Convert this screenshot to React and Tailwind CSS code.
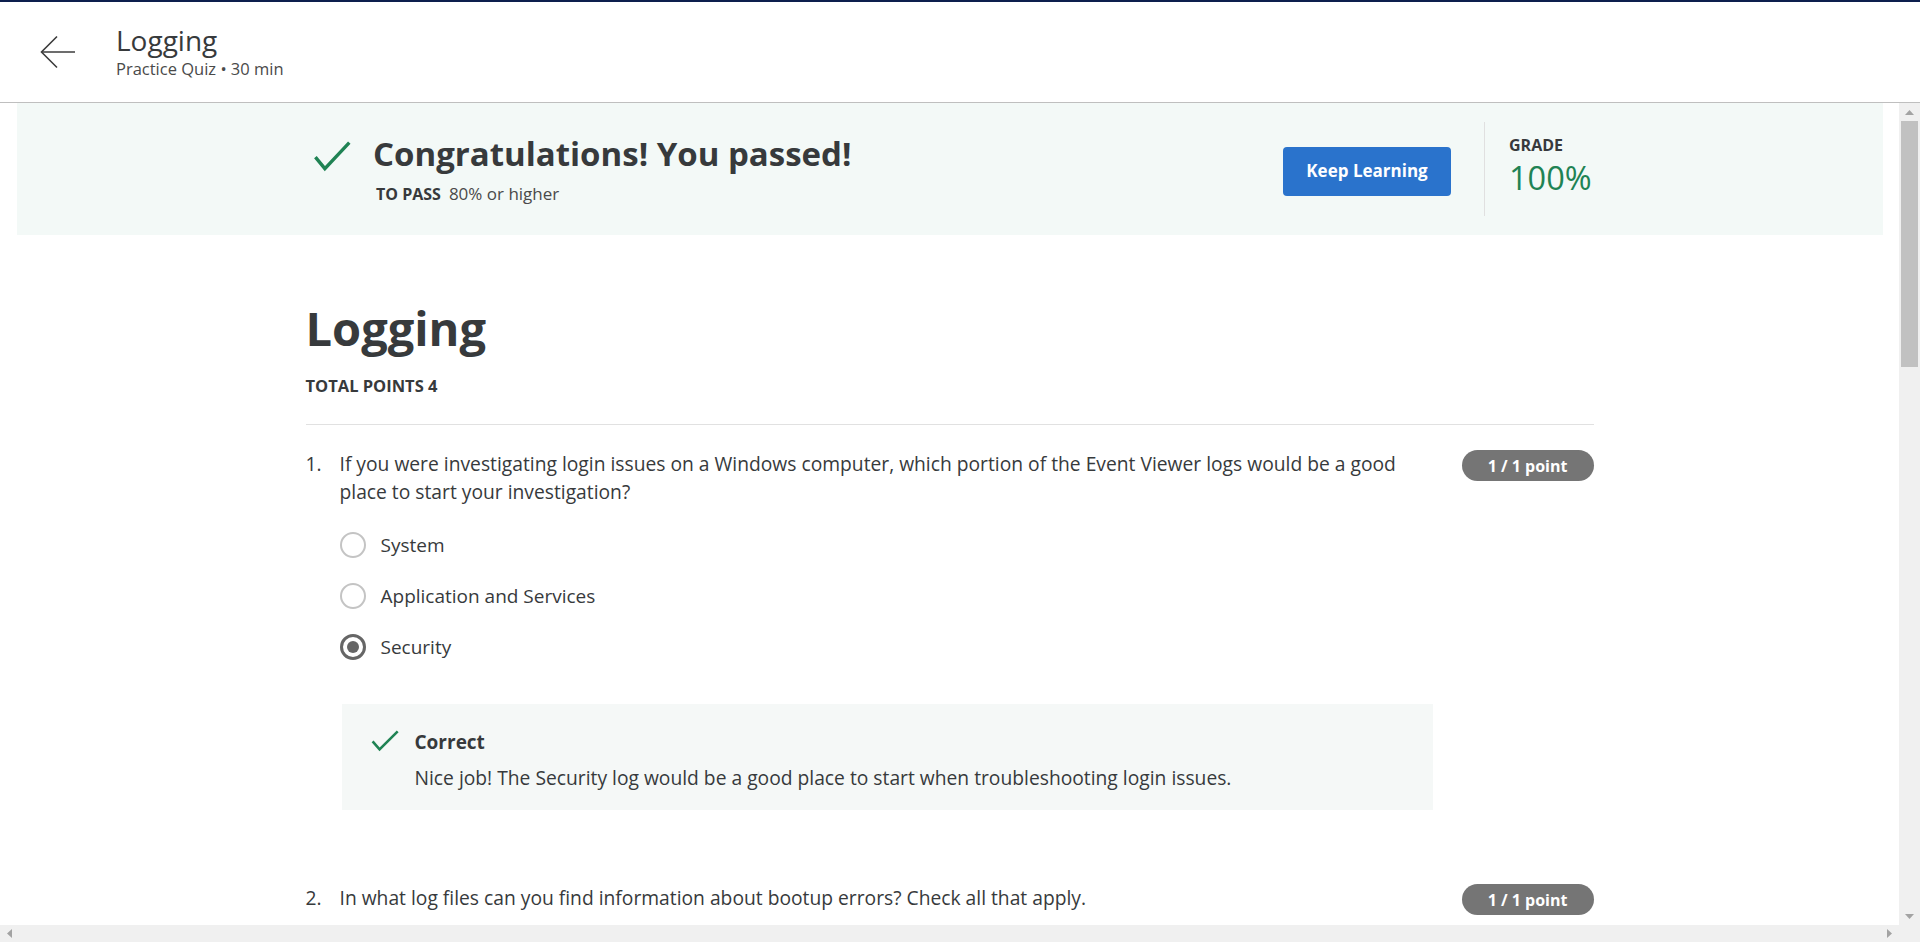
import { useState } from 'react';

const questions = [
  {
    id: 1,
    text: 'If you were investigating login issues on a Windows computer, which portion of the Event Viewer logs would be a good place to start your investigation?',
    options: ['System', 'Application and Services', 'Security'],
    selected: 2,
    feedback: 'Nice job! The Security log would be a good place to start when troubleshooting login issues.',
  },
  {
    id: 2,
    text: 'In what log files can you find information about bootup errors? Check all that apply.',
    options: [],
  },
];

function Check({ w, h, stroke }) {
  return (
    <svg width={w} height={h} viewBox={`0 0 ${w} ${h}`} fill="none">
      <path
        d={`M${stroke} ${h * 0.52} L${w * 0.33} ${h - stroke} L${w - stroke / 2} ${stroke / 2}`}
        stroke="#1f8354"
        strokeWidth={stroke}
        strokeLinecap="butt"
        strokeLinejoin="miter"
      />
    </svg>
  );
}

function Radio({ checked }) {
  if (checked) {
    return (
      <span className="w-[26px] h-[26px] rounded-full border-[3px] border-[#666666] flex items-center justify-center shrink-0">
        <span className="w-[12px] h-[12px] rounded-full bg-[#666666]" />
      </span>
    );
  }
  return <span className="w-[26px] h-[26px] rounded-full border-2 border-[#c4c4c4] shrink-0" />;
}

function Question({ q }) {
  const [selected, setSelected] = useState(q.selected);
  return (
    <div className="flex items-start">
      <span className="w-[34px] shrink-0 text-[19.25px] leading-[28px]">{q.id}.</span>
      <div className="w-[1100px] shrink-0">
        <p className="w-[1080px] text-[19.25px] leading-[28px]">{q.text}</p>
        {q.options.length > 0 && (
          <div className="mt-[25px] flex flex-col gap-[23px]">
            {q.options.map((o, i) => (
              <button key={o} onClick={() => setSelected(i)} className="flex items-center gap-[15px] h-[28px] text-left">
                <Radio checked={selected === i} />
                <span className="text-[19px] leading-[28px]">{o}</span>
              </button>
            ))}
          </div>
        )}
        {q.feedback && (
          <div className="mt-[43px] ml-[2px] w-[1091px] bg-[#f5f8f7] pl-[28px] pt-[24px] pb-[18px] flex items-start gap-[16px]">
            <div className="pt-[2px]">
              <Check w={29} h={22} stroke={2.6} />
            </div>
            <div>
              <p className="text-[19px] leading-[28px] font-bold">Correct</p>
              <p className="text-[19.25px] leading-[28px] mt-[8px]">{q.feedback}</p>
            </div>
          </div>
        )}
      </div>
      <span className="ml-auto w-[132px] h-[31px] rounded-full bg-[#757575] text-white text-[16px] font-bold flex items-center justify-center">
        1 / 1 point
      </span>
    </div>
  );
}

export default function App() {
  return (
    <div
      className="w-[1920px] h-[942px] flex flex-col overflow-hidden bg-white text-[#373a3c]"
      style={{ fontFamily: '"Open Sans", "Noto Sans", sans-serif' }}
    >
      <div className="h-[2px] bg-[#0d1f4e] shrink-0" />
      <header className="h-[101px] shrink-0 flex items-center border-b border-[#bfbfbf] bg-white">
        <button className="ml-[40px] w-[36px] h-[34px] flex items-center justify-center">
          <svg width="36" height="34" viewBox="0 0 36 34" fill="none" stroke="#3c3c3c" strokeWidth="1.6">
            <path d="M35 17H2" />
            <path d="M17 1.5L1.5 17L17 32.5" />
          </svg>
        </button>
        <div className="ml-[40px] flex flex-col mt-[-2px]">
          <h1 className="text-[28px] leading-[34px] text-[#373a3c]">Logging</h1>
          <p className="text-[16.5px] leading-[20px] mt-[2px] text-[#4a4a4a]">Practice Quiz • 30 min</p>
        </div>
      </header>

      <div className="flex-1 flex min-h-0">
        <div className="flex-1 flex flex-col min-w-0">
          <main className="flex-1 overflow-hidden">
            <section className="ml-[17px] mr-[16px] h-[132px] bg-[#f3f9f7] flex items-center">
              <div className="w-[1288px] mx-auto flex items-center">
                <div className="flex items-start mt-[2px]">
                  <div className="mt-[6px] ml-[6px]">
                    <Check w={39} h={31} stroke={3.4} />
                  </div>
                  <div className="ml-[22px]">
                    <h2 className="text-[33px] leading-[42px] font-bold text-[#373a3c] mt-[-2px]">Congratulations! You passed!</h2>
                    <p className="ml-[3px] mt-[8px] text-[16px] leading-[22px]">
                      <span className="font-bold">TO PASS</span>
                      <span className="ml-[8px] text-[17px] text-[#4a4a4a]">80% or higher</span>
                    </p>
                  </div>
                </div>
                <button className="ml-auto w-[168px] h-[49px] rounded-[4px] bg-[#2a73cc] text-white text-[17px] font-bold mt-[4px]">
                  Keep Learning
                </button>
                <div className="ml-[33px] w-px h-[94px] bg-[#e0e0e0]" />
                <div className="ml-[24px] w-[85px] flex flex-col mt-[-6px]">
                  <span className="text-[16px] leading-[20px] font-bold">GRADE</span>
                  <span className="mt-[3px] text-[32.5px] leading-[40px] text-[#1f8354]">100%</span>
                </div>
              </div>
            </section>

            <div className="w-[1288px] mx-auto">
              <h1 className="mt-[63px] text-[47px] leading-[60px] font-bold">Logging</h1>
              <p className="mt-[18px] text-[16.5px] leading-[20px] font-bold">TOTAL POINTS 4</p>
              <div className="mt-[28px] h-px bg-[#e1e1e1]" />
              <div className="mt-[25px]">
                <Question q={questions[0]} />
              </div>
              <div className="mt-[74px]">
                <Question q={questions[1]} />
              </div>
            </div>
          </main>
          <div className="h-[17px] shrink-0 bg-[#f0f0f0] flex items-center justify-between px-[7px]">
            <svg width="5" height="9" viewBox="0 0 5 9"><path d="M5 0V9L0 4.5Z" fill="#a3a3a3" /></svg>
            <svg width="5" height="9" viewBox="0 0 5 9"><path d="M0 0V9L5 4.5Z" fill="#a3a3a3" /></svg>
          </div>
        </div>
        <div className="w-[21px] shrink-0 flex flex-col bg-[#f0f0f0]">
          <div className="h-[18px] flex items-center justify-center">
            <svg width="9" height="5" viewBox="0 0 9 5"><path d="M0 5H9L4.5 0Z" fill="#a3a3a3" /></svg>
          </div>
          <div className="ml-[2px] w-[17px] h-[246px] bg-[#c1c1c1]" />
          <div className="flex-1" />
          <div className="h-[17px] flex items-center justify-center">
            <svg width="9" height="5" viewBox="0 0 9 5"><path d="M0 0H9L4.5 5Z" fill="#a3a3a3" /></svg>
          </div>
          <div className="h-[17px] bg-[#f0f0f0]" />
        </div>
      </div>
    </div>
  );
}
